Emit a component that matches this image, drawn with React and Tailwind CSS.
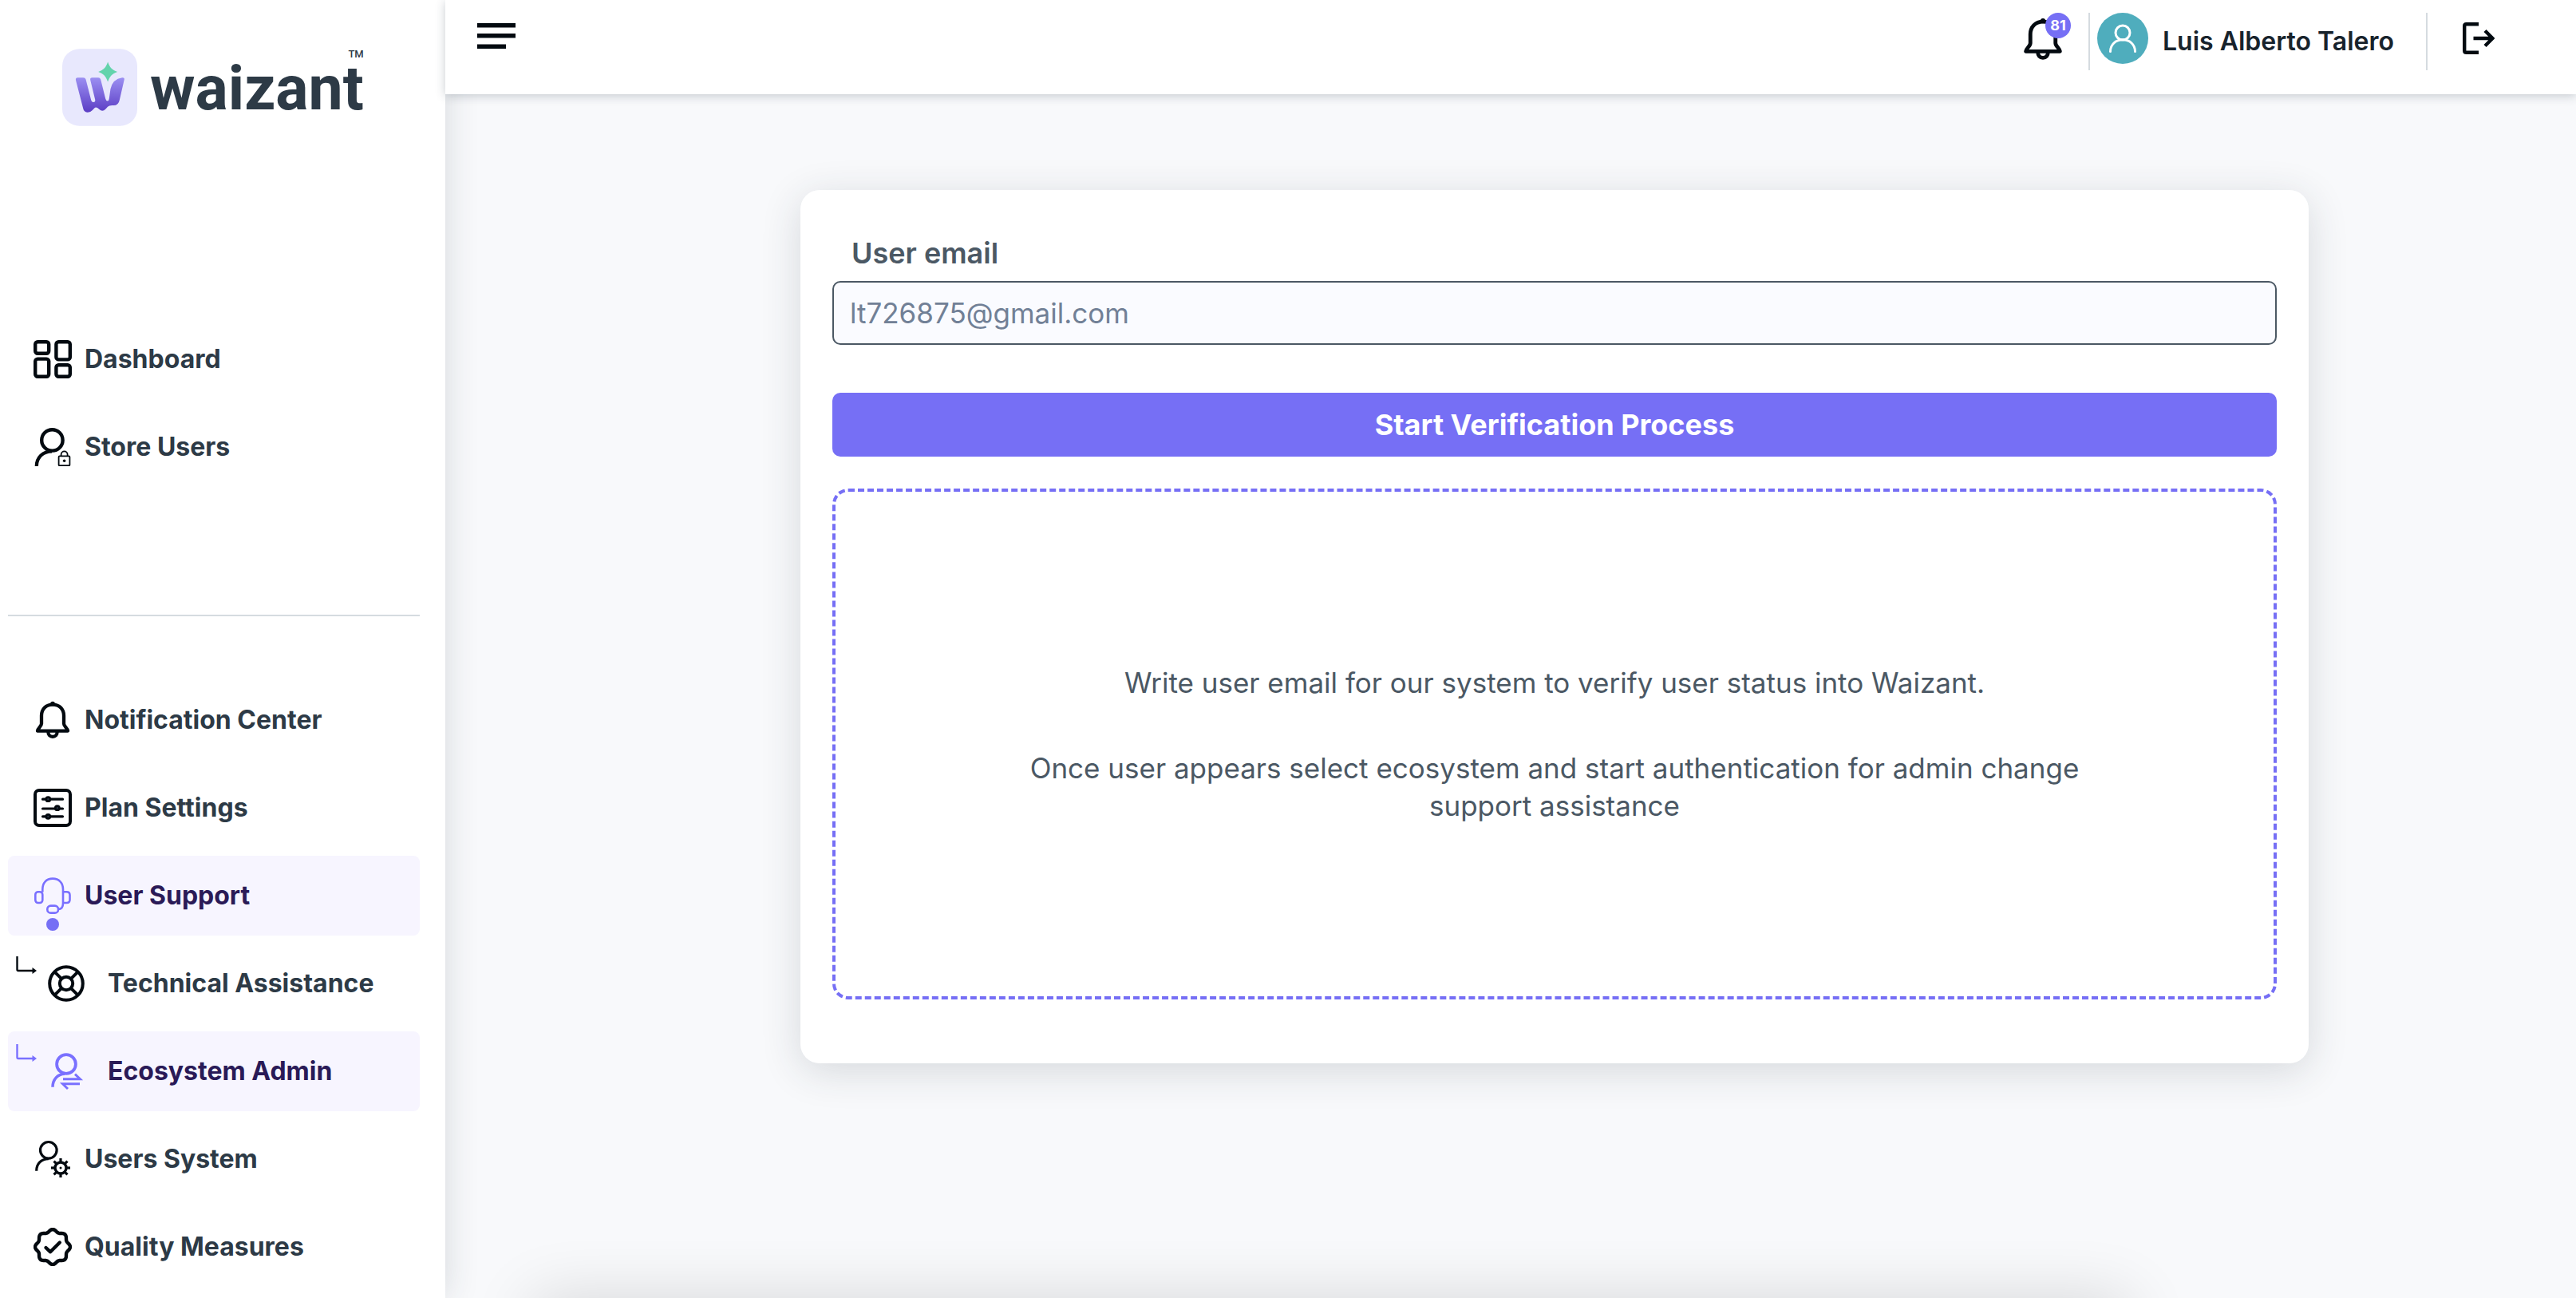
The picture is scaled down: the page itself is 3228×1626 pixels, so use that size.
const strokeProps = { fill: "none", stroke: "currentColor" };

function Svg({ size = 48, box = 48, className = "", children }) {
  return (
    <svg width={size} height={size} viewBox={`0 0 ${box} ${box}`} className={`shrink-0 ${className}`} aria-hidden="true" {...strokeProps}>
      {children}
    </svg>
  );
}

function DashboardIcon() {
  return (
    <Svg>
      <g strokeWidth="4.4">
        <rect x="2.2" y="2.2" width="17" height="14.6" rx="3" />
        <rect x="28.4" y="2.2" width="17.4" height="22.2" rx="3" />
        <rect x="2.2" y="23.6" width="17" height="22.2" rx="3" />
        <rect x="28.4" y="31.2" width="17.4" height="14.6" rx="3" />
      </g>
    </Svg>
  );
}

function StoreUsersIcon() {
  return (
    <Svg>
      <circle cx="23.4" cy="15.4" r="13.2" strokeWidth="4.4" />
      <path d="M3.8 48C3.8 37 12 29.3 23 29.3" strokeWidth="4.2" />
      <rect x="31.6" y="35.4" width="13.8" height="11.8" rx="1" strokeWidth="1.8" />
      <path d="M34.6 35.4V33.4a4 4 0 0 1 8 0V35.4" strokeWidth="1.8" />
      <circle cx="38.6" cy="41.3" r="1.8" fill="currentColor" stroke="none" />
    </Svg>
  );
}

function BellIcon({ size = 48 }) {
  return (
    <Svg size={size}>
      <path d="M24 4.6C15.5 4.6 10 10.500 10 18.500V28.500C10 32 5.400 34 5 37.600H43C42.600 34 38 32 38 28.500V18.500C38 10.500 32.500 4.600 24 4.600Z" strokeWidth="4.300" strokeLinejoin="round" />
      <circle cx="24" cy="3.600" r="2.800" fill="currentColor" stroke="none" />
      <path d="M18.300 38.500C18.300 42.200 20.500 44.800 24 44.800S29.700 42.200 29.700 38.500" strokeWidth="4.200" />
    </Svg>
  );
}

function PlanIcon() {
  return (
    <Svg>
      <rect x="2" y="2" width="44" height="44" rx="5" strokeWidth="4" />
      <path d="M11.500 13.200H36.500M11.500 25H36.500M11.500 34.800H36.500" strokeWidth="3.200" strokeLinecap="round" />
      <g strokeWidth="2.800" fill="#2d3748">
        <circle cx="18.300" cy="13.200" r="2.500" />
        <circle cx="29.800" cy="24.200" r="2.500" />
        <circle cx="18.300" cy="34.800" r="2.500" />
      </g>
    </Svg>
  );
}

function HeadsetIcon() {
  return (
    <Svg>
      <g strokeWidth="2.600">
        <path d="M11.300 19.500V16C11.300 8 16 2.600 24 2.600S37 8 37 16V33.500C37 38 35.500 41 31 41" />
        <rect x="2.300" y="19.200" width="9" height="13.800" rx="3.500" />
        <path d="M37 19.200H41.500Q45.500 19.200 45.500 23.200V29Q45.500 33 41.500 33H37" />
        <rect x="17.300" y="36.600" width="13.700" height="9" rx="4.200" />
      </g>
    </Svg>
  );
}

function LifeBuoyIcon() {
  return (
    <Svg>
      <g strokeWidth="4">
        <circle cx="24" cy="24" r="20.800" />
        <circle cx="24" cy="24" r="8.200" />
        <path d="M9.300 9.300L18.200 18.200M38.700 9.300L29.800 18.200M9.300 38.700L18.200 29.800M38.700 38.700L29.800 29.800" />
      </g>
    </Svg>
  );
}

function UserSwapIcon() {
  return (
    <Svg>
      <circle cx="24" cy="15" r="11.900" strokeWidth="3.800" />
      <path d="M7 43.800C7 34.500 13 27.500 22 27.300" strokeWidth="3.600" />
      <path d="M20 33.800H41.500L35 27.600" strokeWidth="2.900" />
      <path d="M41 39.800H19.500L26 46" strokeWidth="2.900" />
    </Svg>
  );
}

function UserGearIcon() {
  return (
    <Svg>
      <circle cx="18.800" cy="12.800" r="10.300" strokeWidth="3.200" />
      <path d="M3.700 38.800C3.700 29.800 9.500 24 18.800 23.600" strokeWidth="3.200" />
      <circle cx="34" cy="35" r="7" strokeWidth="3.400" />
      {[0, 45, 90, 135, 180, 225, 270, 315].map((angle) => (
        <path key={angle} d="M34 27.500V23" strokeWidth="3.200" transform={`rotate(${angle} 34 35)`} />
      ))}
      <circle cx="34" cy="35" r="1.500" fill="currentColor" stroke="none" />
    </Svg>
  );
}

const sealPath =
  Array.from({ length: 96 }, (_, i) => {
    const t = (i / 96) * Math.PI * 2;
    const r = 20.4 + 1.6 * Math.cos(8 * t);
    return `${i ? "L" : "M"}${(24 + r * Math.cos(t)).toFixed(2)} ${(24 + r * Math.sin(t)).toFixed(2)}`;
  }).join("") + "Z";

function SealCheckIcon() {
  return (
    <Svg>
      <path d={sealPath} strokeWidth="4.400" strokeLinejoin="round" />
      <path d="M15.500 25L21 30.200L32.800 18.500" strokeWidth="4.400" strokeLinecap="round" strokeLinejoin="round" />
    </Svg>
  );
}

function BranchArrow() {
  return (
    <svg width="28" height="24" viewBox="0 0 28 24" className="mt-4 shrink-0 self-start" aria-hidden="true" {...strokeProps}>
      <path d="M1.500 0V16.500Q1.500 18 3 18H22" strokeWidth="2.400" />
      <path d="M20.500 14L26 18L20.500 22Z" fill="currentColor" stroke="none" />
    </svg>
  );
}

function LogoMark() {
  return (
    <svg width="94" height="97" viewBox="24 33 283 290" className="shrink-0" aria-hidden="true">
      <defs>
        <linearGradient id="markFill" x1="0" y1="0" x2="0" y2="1">
          <stop offset="0" stopColor="#9b8ff2" />
          <stop offset="1" stopColor="#5b3dc4" />
        </linearGradient>
      </defs>
      <rect x="24" y="33" width="283" height="290" rx="64" fill="#e8e8fd" />
      <path
        fill="url(#markFill)"
        d="M82 141H103Q111 141 113 148L133 226Q135 234 142 234Q150 233 148 224L130 150Q128 141 137 141H160Q167 141 169 148L187 220Q189 229 195 229Q200 229 201 220L206 184Q214 146 250 141Q260 140 258 149L240 226Q236 246 218 246Q208 245 202 247Q196 249 188 259Q176 272 164 261Q153 248 145 256L138 264Q130 273 118 272Q106 271 103 258L75 150Q74 141 82 141Z"
      />
      <path fill="#63d3ac" d="M196 82C203 103 212 113 232 119C212 126 203 136 196 157C189 136 180 126 160 119C180 113 189 103 196 82Z" />
    </svg>
  );
}

const mainItems = [
  { label: "Dashboard", Icon: DashboardIcon },
  { label: "Store Users", Icon: StoreUsersIcon },
];

const adminItems = [
  { label: "Notification Center", Icon: BellIcon },
  { label: "Plan Settings", Icon: PlanIcon },
  { label: "User Support", Icon: HeadsetIcon, active: true, dot: true },
  { label: "Technical Assistance", Icon: LifeBuoyIcon, sub: true },
  { label: "Ecosystem Admin", Icon: UserSwapIcon, sub: true, active: true },
  { label: "Users System", Icon: UserGearIcon },
  { label: "Quality Measures", Icon: SealCheckIcon },
];

function NavItem({ label, Icon, active, sub, dot }) {
  return (
    <li>
      <a
        href="#"
        aria-current={active ? "page" : undefined}
        className={`flex h-[100px] items-center rounded-lg ${sub ? "pl-2.5" : "pl-8"} ${active ? "bg-[#f7f5ff] text-[#7a70ff]" : "text-[#030a10]"}`}
      >
        {sub && <BranchArrow />}
        <span className={`relative ${sub ? "ml-[11px]" : ""}`}>
          <Icon />
          {dot && <span className="absolute top-13 left-4 size-4 rounded-full bg-[#766ff5]" />}
        </span>
        <span className={`text-[32px] font-bold whitespace-nowrap ${sub ? "ml-7" : "ml-4"} ${active ? "text-[#2a1a57]" : "text-[#2d3a46]"}`}>
          {label}
        </span>
      </a>
    </li>
  );
}

function Sidebar() {
  return (
    <aside className="z-10 w-[558px] shrink-0 bg-white pt-[61px] pr-8 pl-2.5 shadow-[0_0_40px_rgba(35,50,65,0.16)]">
      <a href="#" aria-label="waizant home" className="ml-17 flex w-fit items-start gap-4 text-[#2d3a46]">
        <LogoMark />
        <span className="relative mt-3 font-[Roboto] text-[77px] leading-none font-bold">
          waizant
          <span className="absolute -top-3 right-0 text-[13px] leading-none font-medium">TM</span>
        </span>
      </a>
      <nav aria-label="Main" className="mt-[242px]">
        <ul className="flex flex-col gap-2.5">
          {mainItems.map((item) => (
            <NavItem key={item.label} {...item} />
          ))}
        </ul>
        <hr className="mt-40 mb-20 border-t-2 border-[#d5dbe0]" />
        <ul className="flex flex-col gap-2.5">
          {adminItems.map((item) => (
            <NavItem key={item.label} {...item} />
          ))}
        </ul>
      </nav>
    </aside>
  );
}

function Header() {
  return (
    <header className="relative z-20 flex items-start justify-between bg-white pt-4 pr-[102px] pb-[30px] pl-10 text-[#030a10] shadow-[0_2px_12px_rgba(35,50,65,0.24)]">
      <button type="button" aria-label="Toggle menu" className="mt-3">
        <svg width="48" height="34" viewBox="0 0 48 34" fill="currentColor" aria-hidden="true">
          <rect y="1" width="48" height="5.500" />
          <rect y="14" width="48" height="5.500" />
          <rect y="27.500" width="36" height="5.500" />
        </svg>
      </button>
      <div className="flex items-start">
        <button type="button" aria-label="81 notifications" className="relative mt-1.5 mr-[30px]">
          <BellIcon size={54} />
          <span className="absolute -top-1.5 -right-2 flex size-8 items-center justify-center rounded-full bg-[#766ff5] text-lg font-bold text-white">81</span>
        </button>
        <div className="flex h-[72px] items-start border-x-2 border-[#d5dbe0] pr-10 pl-[9px]">
          <span className="flex size-16 items-center justify-center rounded-full bg-[#4fadbd] text-white">
            <Svg size={36} box={36}>
              <circle cx="18" cy="11" r="9" strokeWidth="3" />
              <path d="M2.500 34.500C2.500 26 9 19.800 18 19.800S33.500 26 33.500 34.500" strokeWidth="3" strokeLinecap="round" />
            </Svg>
          </span>
          <span className="ml-[18px] text-[32px] leading-[72px] font-semibold text-[#18232c]">Luis Alberto Talero</span>
        </div>
        <button type="button" aria-label="Log out" className="mt-3 ml-11">
          <Svg size={40} box={40}>
            <path d="M20 2.200H4.500Q2.200 2.200 2.200 4.500V35.500Q2.200 37.800 4.500 37.800H20" strokeWidth="4.400" />
            <path d="M13.500 20H37M28 10.500L37.500 20L28 29.500" strokeWidth="4.400" />
          </Svg>
        </button>
      </div>
    </header>
  );
}

function VerificationCard() {
  return (
    <form
      onSubmit={(event) => event.preventDefault()}
      className="flex w-full max-w-[1890px] flex-col rounded-3xl bg-white px-10 pt-10 pb-20 shadow-[0_10px_50px_rgba(35,50,65,0.16)]"
    >
      <label htmlFor="user-email" className="pt-3.5 pb-2.5 pl-6 text-[36px] leading-[50px] font-semibold text-[#4b5864]">
        User email
      </label>
      <input
        id="user-email"
        type="email"
        defaultValue="lt726875@gmail.com"
        className="h-20 rounded-[10px] border-2 border-[#4b5864] bg-[#fafbff] px-5 text-[35px] text-[#718096] outline-none"
      />
      <button type="submit" className="mt-15 h-20 rounded-[10px] bg-[#766ff5] text-[36px] font-bold text-white">
        Start Verification Process
      </button>
      <div className="mt-10 flex h-160 flex-col items-center justify-center gap-15 rounded-[20px] border-4 border-dashed border-[#766ff5] px-10 text-center text-[35px] leading-[47px] text-[#4b5864]">
        <p>Write user email for our system to verify user status into Waizant.</p>
        <p className="max-w-[1400px]">
          Once user appears select ecosystem and start authentication for admin change support assistance
        </p>
      </div>
    </form>
  );
}

export default function App() {
  return (
    <div className="flex min-h-screen bg-[#f8f9fb] font-[Inter,sans-serif]">
      <Sidebar />
      <div className="flex min-w-0 grow flex-col">
        <Header />
        <main className="relative flex grow items-start justify-center overflow-hidden pt-30 pl-[110px]">
          <VerificationCard />
          <div className="absolute top-full right-[560px] left-[110px] h-20 shadow-[0_0_80px_rgba(0,0,0,0.14)]" />
        </main>
      </div>
    </div>
  );
}
